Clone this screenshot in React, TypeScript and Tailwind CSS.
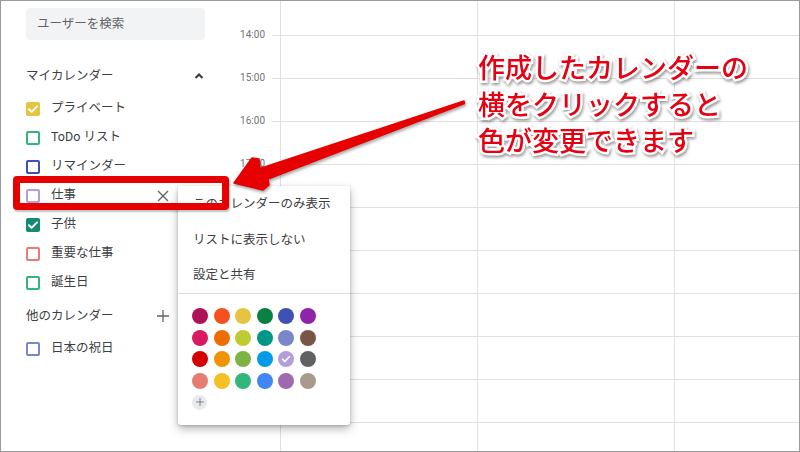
import React from 'react';

const jp = "font-['Roboto','Noto_Sans_CJK_JP',sans-serif]";

type Cal = { name: string; color: string; checked?: boolean; hover?: boolean };

const myCalendars: Cal[] = [
  { name: 'プライベート', color: '#e4c441', checked: true },
  { name: 'ToDo リスト', color: '#33b679' },
  { name: 'リマインダー', color: '#3f51b5' },
  { name: '仕事', color: '#b39ddb', hover: true },
  { name: '子供', color: '#138a72', checked: true },
  { name: '重要な仕事', color: '#e67c73' },
  { name: '誕生日', color: '#33b679' },
];

const palette = [
  ['#ad1457', '#f4511e', '#e4c441', '#0b8043', '#3f51b5', '#8e24aa'],
  ['#d81b60', '#ef6c00', '#c0ca33', '#009688', '#7986cb', '#795548'],
  ['#d50000', '#f09300', '#7cb342', '#039be5', '#b39ddb', '#616161'],
  ['#e67c73', '#f6bf26', '#33b679', '#4285f4', '#9e69af', '#a79b8e'],
];

// line rows below the partial top one; labels only on the first few
const hours = ['14:00', '15:00', '16:00', '17:00', '', '', '', '', '', ''];

function Check({ size = 14 }: { size?: number }) {
  return (
    <svg width={size} height={size} viewBox="0 0 14 14">
      <path d="M3 7.3l2.6 2.6L11 4.4" fill="none" stroke="#fff" strokeWidth="2" strokeLinecap="round" strokeLinejoin="round" />
    </svg>
  );
}

function Checkbox({ color, checked }: { color: string; checked?: boolean }) {
  return checked ? (
    <div className="w-[14px] h-[14px] rounded-[2px] flex items-center justify-center" style={{ background: color }}>
      <Check />
    </div>
  ) : (
    <div className="w-[14px] h-[14px] rounded-[2px] border-2" style={{ borderColor: color }} />
  );
}

function CloseIcon() {
  return (
    <svg width="12" height="12" viewBox="0 0 12 12">
      <path d="M1 1l10 10M11 1L1 11" stroke="#5f6368" strokeWidth="1.4" />
    </svg>
  );
}

function PlusIcon({ size = 12, color = '#5f6368' }: { size?: number; color?: string }) {
  return (
    <svg width={size} height={size} viewBox="0 0 12 12">
      <path d="M6 0v12M0 6h12" stroke={color} strokeWidth="1.3" />
    </svg>
  );
}

function Sidebar() {
  return (
    <aside className={`w-[231px] shrink-0 flex flex-col pl-[25px] pr-[27px] text-[12.5px] text-[#3c4043] ${jp}`}>
      <div className="mt-[7px] h-[32px] rounded-[4px] bg-[#f1f3f4] flex items-center pl-[11px] text-[#5f6368]">
        ユーザーを検索
      </div>

      <div className="mt-[21px] h-[30px] flex items-center justify-between">
        <span className="text-[#3c4043]">マイカレンダー</span>
        <svg width="16" height="16" viewBox="0 0 16 16" className="mr-[-2px]">
          <path d="M4.5 10L8 6.5l3.5 3.5" fill="none" stroke="#3c4043" strokeWidth="2.2" />
        </svg>
      </div>

      <div className="mt-[3px] flex flex-col">
        {myCalendars.map((c) => (
          <div key={c.name} className="h-[29px] flex items-center">
            <Checkbox color={c.color} checked={c.checked} />
            <span className="ml-[11px] flex-1">{c.name}</span>
            {c.hover && (
              <span className="mr-[36px] flex items-center">
                <CloseIcon />
              </span>
            )}
          </div>
        ))}
      </div>

      <div className="mt-[4px] h-[30px] flex items-center">
        <span className="flex-1 text-[#3c4043]">他のカレンダー</span>
        <span className="mr-[36px] flex items-center">
          <PlusIcon />
        </span>
      </div>

      <div className="mt-[3px] h-[29px] flex items-center">
        <Checkbox color="#7986cb" />
        <span className="ml-[11px]">日本の祝日</span>
      </div>
    </aside>
  );
}

function GridCells() {
  return (
    <>
      <div className="w-[8px] shrink-0" />
      <div className="w-[197px] shrink-0 border-l border-[#e0e0e0]" />
      <div className="w-[197px] shrink-0 border-l border-[#e0e0e0]" />
      <div className="flex-1 border-l border-[#e0e0e0]" />
    </>
  );
}

function Week() {
  return (
    <div className="flex-1 flex flex-col">
      <div className="h-[34px] shrink-0 flex">
        <div className="w-[40px] shrink-0" />
        <div className="flex-1 flex">
          <GridCells />
        </div>
      </div>
      {hours.map((h, i) => (
        <div key={i} className="h-[43px] shrink-0 flex">
          <div className={`w-[40px] shrink-0 text-right pr-[7px] text-[10px] leading-none text-[#70757a] -mt-[5px] ${jp}`}>
            {h}
          </div>
          <div className="flex-1 flex border-t border-[#e0e0e0]">
            <GridCells />
          </div>
        </div>
      ))}
    </div>
  );
}

function ColorMenu() {
  return (
    <div
      className={`absolute left-[177px] top-[185px] w-[172px] h-[239px] bg-white rounded-[3px] shadow-[0_4px_10px_rgba(0,0,0,0.28),0_1px_3px_rgba(0,0,0,0.18)] text-[12.5px] text-[#3c4043] ${jp}`}
    >
      <div className="h-[36px] flex items-center pl-[15px]">このカレンダーのみ表示</div>
      <div className="h-[36px] flex items-center pl-[15px]">リストに表示しない</div>
      <div className="h-[36px] flex items-center pl-[15px] border-b border-[#dadce0]">設定と共有</div>
      <div className="pt-[14px] pl-[14px] flex flex-col gap-[5.5px]">
        {palette.map((row, r) => (
          <div key={r} className="flex gap-[5.5px]">
            {row.map((c) => (
              <div key={c} className="w-4 h-4 rounded-full flex items-center justify-center" style={{ background: c }}>
                {c === '#b39ddb' && <Check size={12} />}
              </div>
            ))}
          </div>
        ))}
        <div className="w-[15px] h-[15px] rounded-full bg-[#e8eaed] flex items-center justify-center mt-[0.5px]">
          <PlusIcon size={8} color="#70757a" />
        </div>
      </div>
    </div>
  );
}

function Arrow() {
  return (
    <svg
      className="absolute left-0 top-0 pointer-events-none drop-shadow-[1px_2px_1.5px_rgba(0,0,0,0.35)]"
      width="800"
      height="452"
      viewBox="0 0 800 452"
    >
      <polygon
        points="233,182 251,157 258,158 259,167.5 463,100 463.5,102.5 267,178 268,184 262,189"
        fill="#e60000"
        strokeLinejoin="round"
        stroke="#e60000"
        strokeWidth="1.5"
      />
    </svg>
  );
}

export default function App() {
  return (
    <div className="w-[800px] h-[452px] relative overflow-hidden bg-white border border-[#9a9a9a] flex">
      <Sidebar />
      <Week />

      <ColorMenu />

      {/* highlight box */}
      <div className="absolute left-[12px] top-[175px] w-[216px] h-[34px] border-[7px] border-[#e60000] rounded-[4px] shadow-[1px_2px_2px_rgba(0,0,0,0.25)]" />

      <Arrow />

      <div
        className={`absolute left-[477px] top-[50px] text-[27px] leading-[36.5px] font-medium text-[#e60012] [-webkit-text-stroke:5px_#fff] [paint-order:stroke_fill] drop-shadow-[1px_2px_1.5px_rgba(0,0,0,0.4)] ${jp}`}
      >
        <div>作成したカレンダーの</div>
        <div>横をクリックすると</div>
        <div>色が変更できます</div>
      </div>
    </div>
  );
}
